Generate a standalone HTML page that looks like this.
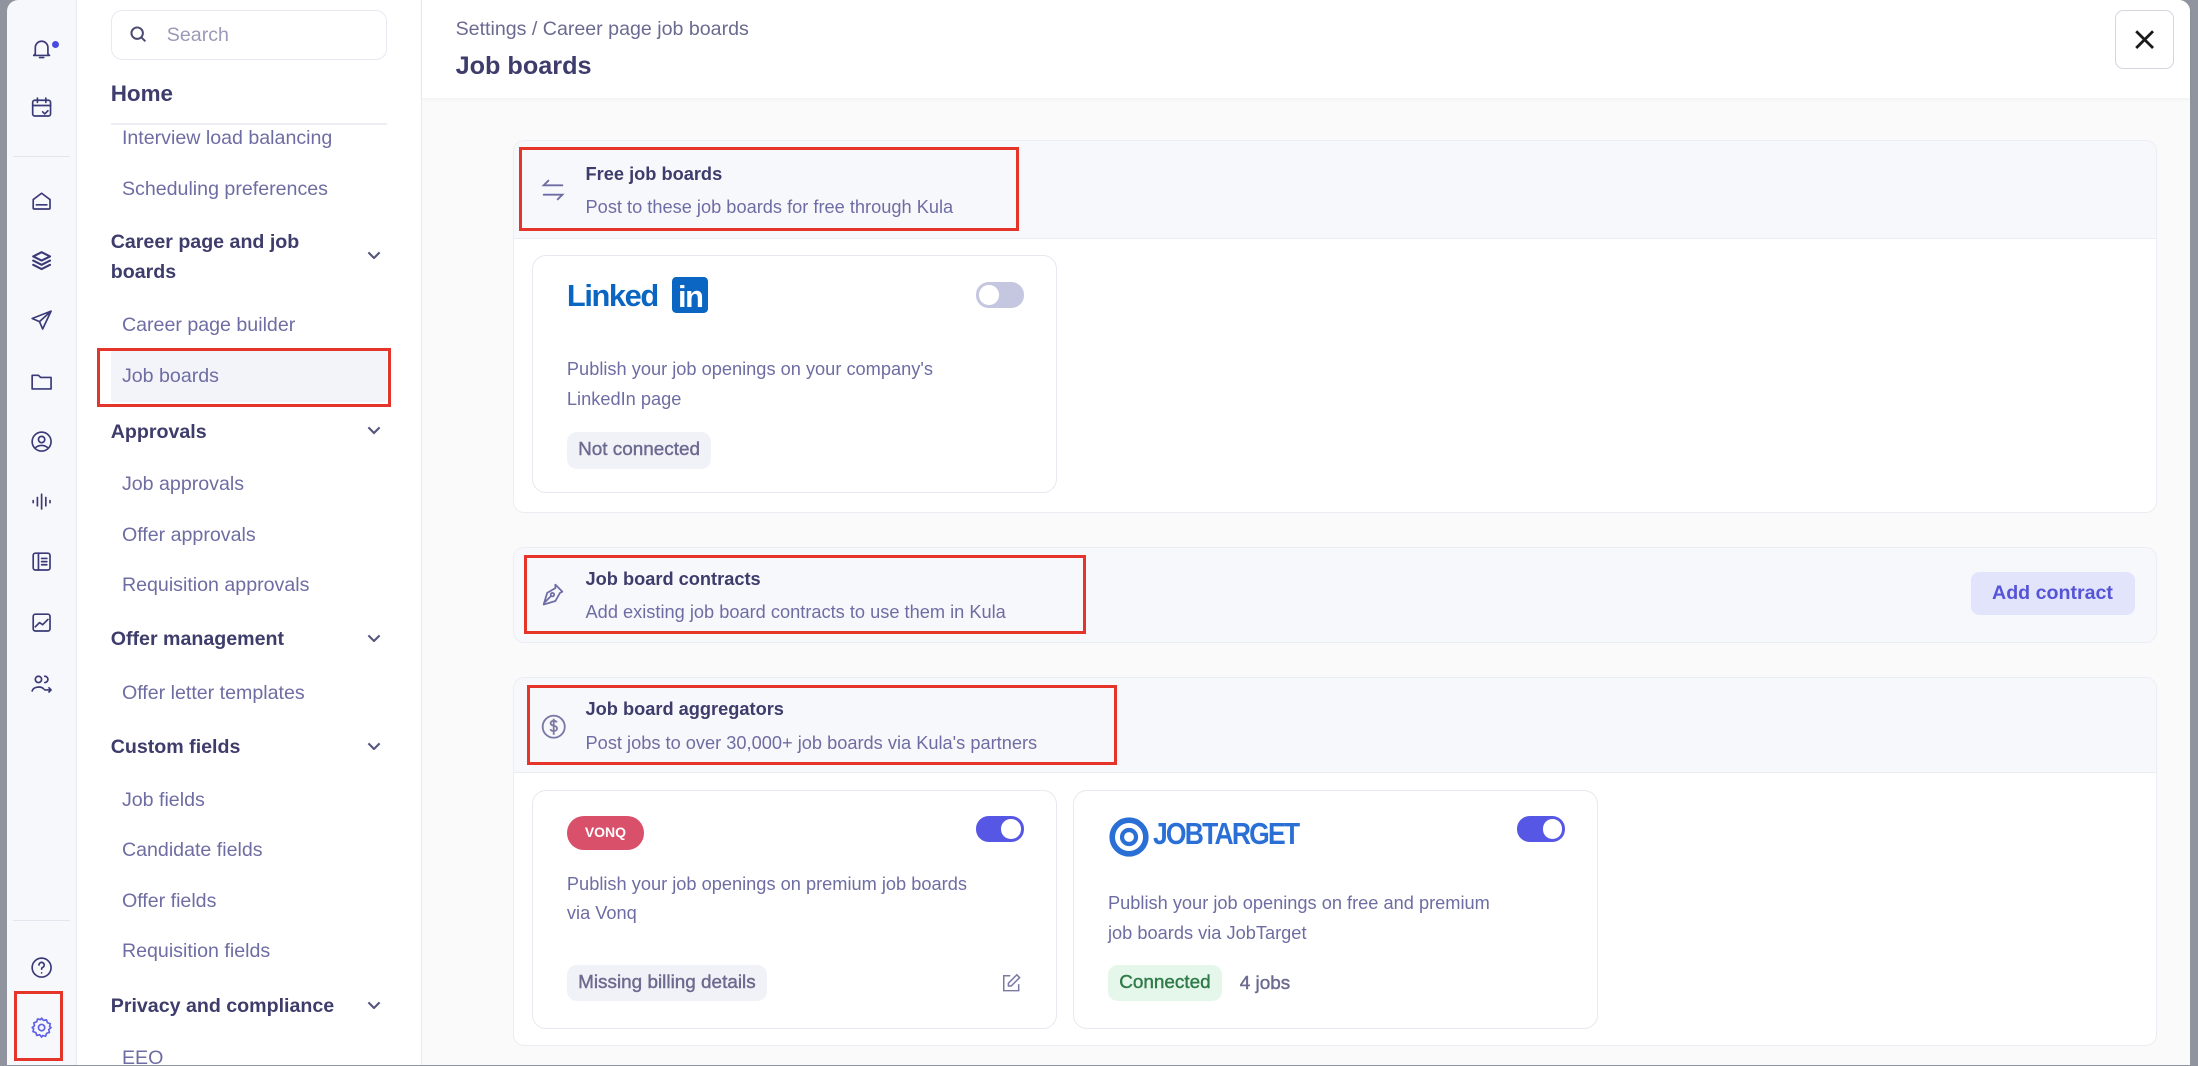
<!DOCTYPE html>
<html><head><meta charset="utf-8"><style>
*{box-sizing:border-box;margin:0;padding:0}
html,body{width:2198px;height:1066px;overflow:hidden;background:#8f949e}
#w{zoom:1.40179;position:relative;width:1568px;height:760px;font-family:"Liberation Sans",sans-serif;}
.a{position:absolute}
#rail{left:5px;top:0;width:50px;height:760px;background:#f7f8fc;border-right:1px solid #e8e9f0;border-top-left-radius:8px}
#side{left:55px;top:0;width:246px;height:760px;background:#fff;border-right:1px solid #e8e9f0}
#main{left:301px;top:0;width:1261px;height:760px;background:#fafafa;border-top-right-radius:8px}
.ic{position:absolute;left:13px;width:24px;height:24px}
.ic svg{width:18px;height:18px;margin:3px;fill:none;stroke:#3b3a78;stroke-width:1.6;stroke-linecap:round;stroke-linejoin:round}
.it{position:absolute;left:32px;font-size:14px;color:#6e6da3;line-height:18px;margin-top:1px}
.hd{position:absolute;left:24px;font-size:14px;font-weight:bold;color:#3d3c6b;line-height:21px;margin-top:1px}
.chev{position:absolute;left:207px;width:10px;height:6px}
.red{position:absolute;border:2.5px solid #e5352b}
.sec{position:absolute;left:65px;width:1173px;background:#fff;border:1px solid #ececf3;border-radius:8px;overflow:hidden}
.sh{position:absolute;left:0;top:0;width:100%;background:#f7f8fc;border-bottom:1px solid #ececf3}
.t{position:absolute;left:51px;font-size:13px;font-weight:bold;color:#3d3c6b}
.s{position:absolute;left:51px;font-size:13px;color:#6e6da3}
.card{position:absolute;width:374px;height:170px;background:#fff;border:1px solid #e8e9f0;border-radius:10px}
.d{position:absolute;left:24px;font-size:13px;color:#6e6da3;line-height:21px}
.bd{position:absolute;left:24px;height:26px;border-radius:7px;background:#f1f2f8;color:#6b6a8f;font-size:13.5px;padding:0 8px;line-height:26px;-webkit-text-stroke:0.3px currentColor}
.tg{position:absolute;left:316px;width:34px;height:18px;border-radius:9px}
.tg i{position:absolute;top:2px;width:14px;height:14px;border-radius:50%;background:#fff}
</style></head><body><div id="w">
<div class="a" id="rail">
<div class="ic" style="top:23px"><svg viewBox="0 0 24 24"><path d="M6 17V11a6 6 0 0 1 12 0v6l1.5 1.5h-15z M10 20.5h4"/></svg></div>
<div class="a" style="left:32px;top:29px;width:5px;height:5px;border-radius:50%;background:#4a4ae0"></div>
<div class="ic" style="top:65px"><svg viewBox="0 0 24 24"><rect x="3.5" y="5" width="17" height="15" rx="2"/><path d="M3.5 10h17M8 3v4M16 3v4M13 16l2 2 3-3"/></svg></div>
<div class="a" style="left:4px;top:111px;width:41px;height:1px;background:#e4e5ee"></div>
<div class="ic" style="top:131px"><svg viewBox="0 0 24 24"><path d="M4 11l8-6 8 6v8a1 1 0 0 1-1 1H5a1 1 0 0 1-1-1z M7 16h10"/></svg></div>
<div class="ic" style="top:174px"><svg viewBox="0 0 24 24" style="stroke-width:2"><path d="M12 4l8 4-8 4-8-4z M4 12l8 4 8-4 M4 16l8 4 8-4"/></svg></div>
<div class="ic" style="top:217px"><svg viewBox="0 0 24 24"><path d="M21 3L3 10l7 3 3 7z M10 13l11-10"/></svg></div>
<div class="ic" style="top:260px"><svg viewBox="0 0 24 24"><path d="M3 6h6l2 2h10v11H3z"/></svg></div>
<div class="ic" style="top:303px"><svg viewBox="0 0 24 24"><circle cx="12" cy="12" r="9"/><circle cx="12" cy="10" r="3"/><path d="M6.5 17.5c3-2.5 8-2.5 11 0"/></svg></div>
<div class="ic" style="top:346px"><svg viewBox="0 0 24 24"><path d="M4 11v2M8 8v8M12 5v14M16 8v8M20 11v2"/></svg></div>
<div class="ic" style="top:389px"><svg viewBox="0 0 24 24"><rect x="4" y="4" width="16" height="16" rx="2"/><path d="M9 4v16M12 9h5M12 12h5M12 15h5"/></svg></div>
<div class="ic" style="top:432px"><svg viewBox="0 0 24 24"><rect x="4" y="4" width="16" height="16" rx="2"/><path d="M6 16l4-4 3 2 5-5"/></svg></div>
<div class="ic" style="top:476px"><svg viewBox="0 0 24 24"><circle cx="9" cy="8" r="3"/><path d="M3 19c1-4 8-5 11-2M15 5a3 3 0 0 1 0 6M15 18h6M19 16l2 2-2 2"/></svg></div>
<div class="a" style="left:4px;top:656px;width:41px;height:1px;background:#e4e5ee"></div>
<div class="ic" style="top:678px"><svg viewBox="0 0 24 24"><circle cx="12" cy="12" r="9"/><path d="M9.5 9.5a2.5 2.5 0 1 1 3.5 2.3c-.7.4-1 .9-1 1.7M12 17h.01"/></svg></div>
<div class="ic" style="top:721px"><svg viewBox="0 0 24 24" style="stroke:#6060e8"><circle cx="12" cy="12" r="3"/><path d="M12 3l1.8 2.2 2.8-.6.9 2.7 2.7.9-.6 2.8L21 12l-2.2 1.8.6 2.8-2.7.9-.9 2.7-2.8-.6L12 21l-1.8-2.2-2.8.6-.9-2.7-2.7-.9.6-2.8L3 12l2.2-1.8-.6-2.8 2.7-.9.9-2.7 2.8.6z"/></svg></div>
<div class="red" style="left:5px;top:707px;width:35px;height:50px"></div>
</div>
<div class="a" id="side">
<div class="a" style="left:24px;top:7px;width:197px;height:36px;border:1px solid #e8e9f0;border-radius:8px"></div>
<svg class="a" style="left:37px;top:18px" width="14" height="14" viewBox="0 0 24 24" fill="none" stroke="#4a4a70" stroke-width="2.4"><circle cx="10" cy="10" r="7"/><path d="M15 15l5 5"/></svg>
<div class="a" style="left:64px;top:17px;font-size:14px;color:#9a9ab8">Search</div>
<div class="a" style="left:24px;top:58px;font-size:16px;font-weight:bold;color:#3d3c6b">Home</div>
<div class="a" style="left:24px;top:88px;width:197px;height:1px;background:#ededf3"></div>
<div class="it" style="top:89px">Interview load balancing</div>
<div class="it" style="top:125px">Scheduling preferences</div>
<div class="hd" style="top:162px">Career page and job<br>boards</div>
<svg class="chev" style="top:179px" viewBox="0 0 10 6" fill="none" stroke="#55557a" stroke-width="1.5"><path d="M1 1l4 4 4-4"/></svg>
<div class="it" style="top:222px">Career page builder</div>
<div class="a" style="left:24px;top:249px;width:197px;height:38px;background:#f3f4f9;border-radius:2px"></div>
<div class="it" style="top:259px">Job boards</div>
<div class="red" style="left:14px;top:248px;width:210px;height:42px"></div>
<div class="hd" style="top:297px">Approvals</div>
<svg class="chev" style="top:304px" viewBox="0 0 10 6" fill="none" stroke="#55557a" stroke-width="1.5"><path d="M1 1l4 4 4-4"/></svg>
<div class="it" style="top:336px">Job approvals</div>
<div class="it" style="top:372px">Offer approvals</div>
<div class="it" style="top:408px">Requisition approvals</div>
<div class="hd" style="top:445px">Offer management</div>
<svg class="chev" style="top:452px" viewBox="0 0 10 6" fill="none" stroke="#55557a" stroke-width="1.5"><path d="M1 1l4 4 4-4"/></svg>
<div class="it" style="top:485px">Offer letter templates</div>
<div class="hd" style="top:522px">Custom fields</div>
<svg class="chev" style="top:529px" viewBox="0 0 10 6" fill="none" stroke="#55557a" stroke-width="1.5"><path d="M1 1l4 4 4-4"/></svg>
<div class="it" style="top:561px">Job fields</div>
<div class="it" style="top:597px">Candidate fields</div>
<div class="it" style="top:633px">Offer fields</div>
<div class="it" style="top:669px">Requisition fields</div>
<div class="hd" style="top:707px">Privacy and compliance</div>
<svg class="chev" style="top:714px" viewBox="0 0 10 6" fill="none" stroke="#55557a" stroke-width="1.5"><path d="M1 1l4 4 4-4"/></svg>
<div class="it" style="top:745px">EEO</div>
</div>
<div class="a" id="main">
<div class="a" style="left:0;top:0;width:1261px;height:70px;background:#fff;box-shadow:0 1px 3px rgba(0,0,0,.04);border-top-right-radius:8px"></div>
<div class="a" style="left:24px;top:13px;font-size:14px;color:#6b6a90">Settings / Career page job boards</div>
<div class="a" style="left:24px;top:37px;font-size:18px;font-weight:bold;color:#3d3c6b">Job boards</div>
<div class="a" style="left:1208px;top:7px;width:42px;height:42px;border:1px solid #d5d5de;border-radius:6px;background:#fff"></div>
<svg class="a" style="left:1220px;top:19px" width="18" height="18" viewBox="0 0 18 18" stroke="#1a1a1a" stroke-width="2"><path d="M3 3l12 12M15 3L3 15"/></svg>

<div class="sec" style="top:100px;height:266px">
<div class="sh" style="height:70px"></div>
<svg class="a" style="left:18px;top:25px" width="20" height="20" viewBox="0 0 24 24" fill="none" stroke="#6e6da3" stroke-width="1.6" stroke-linecap="round"><path d="M20 8H4l4-4M4 16h16l-4 4"/></svg>
<div class="t" style="top:16px">Free job boards</div>
<div class="s" style="top:40px">Post to these job boards for free through Kula</div>
<div class="card" style="left:13px;top:81px">
<div class="a" style="left:24px;top:16px;font-size:22px;font-weight:bold;color:#0a66c2;letter-spacing:-1px">Linked</div>
<div class="a" style="left:99px;top:15px;width:26px;height:26px;background:#0a66c2;border-radius:3px;color:#fff;font-size:22px;font-weight:bold;text-align:center;line-height:28px;letter-spacing:-1px">in</div>
<div class="tg" style="top:19px;background:#c5c7e0"><i style="left:2px"></i></div>
<div class="d" style="top:71px">Publish your job openings on your company's<br>LinkedIn page</div>
<div class="bd" style="top:126px">Not connected</div>
</div>
</div>

<div class="sec" style="top:390px;height:69px">
<div class="sh" style="height:69px;border:0"></div>
<svg class="a" style="left:18px;top:23px" width="20" height="20" viewBox="0 0 24 24" fill="none" stroke="#6e6da3" stroke-width="1.5" stroke-linejoin="round"><path d="M14 4l6 6-2 1-4 7-10 3 3-10 7-4z M4 20l6-6"/><circle cx="11.5" cy="12.5" r="1.5"/></svg>
<div class="t" style="top:15px">Job board contracts</div>
<div class="s" style="top:39px">Add existing job board contracts to use them in Kula</div>
<div class="a" style="left:1039px;top:17px;width:117px;height:31px;background:#e2e4fb;border-radius:6px;color:#5555d6;font-size:14px;font-weight:bold;text-align:center;line-height:31px">Add contract</div>
</div>

<div class="sec" style="top:483px;height:263px">
<div class="sh" style="height:68px"></div>
<svg class="a" style="left:18px;top:24px" width="21" height="21" viewBox="0 0 24 24" fill="none" stroke="#7a79a3" stroke-width="1.5"><circle cx="12" cy="12" r="9"/><path d="M14.5 8.5c-.5-1-1.5-1.3-2.5-1.3-1.5 0-2.5.8-2.5 2s1 1.7 2.5 2 2.7.8 2.7 2.1-1.2 2.2-2.7 2.2c-1.2 0-2.3-.5-2.7-1.5M12 5.5v13"/></svg>
<div class="t" style="top:15px">Job board aggregators</div>
<div class="s" style="top:39px">Post jobs to over 30,000+ job boards via Kula's partners</div>
<div class="card" style="left:13px;top:80px">
<div class="a" style="left:24px;top:18px;width:55px;height:24px;background:#d9506a;border-radius:12px;color:#fff;font-size:10px;font-weight:bold;text-align:center;line-height:24px">VONQ</div>
<div class="tg" style="top:18px;background:#5757e6"><i style="left:18px"></i></div>
<div class="d" style="top:56px">Publish your job openings on premium job boards<br>via Vonq</div>
<div class="bd" style="top:124px">Missing billing details</div>
<svg class="a" style="left:333px;top:129px" width="16" height="16" viewBox="0 0 24 24" fill="none" stroke="#7a79a3" stroke-width="1.6"><path d="M11 4H4v16h16v-7M18 3l3 3-9 9H9v-3z"/></svg>
</div>
<div class="card" style="left:399px;top:80px">
<svg class="a" style="left:24px;top:18px" width="30" height="30" viewBox="0 0 30 30" fill="none" stroke="#2a6fd6"><circle cx="15" cy="15" r="12" stroke-width="4"/><circle cx="15" cy="15" r="5" stroke-width="3"/></svg>
<div class="a" style="left:56px;top:18px;font-size:22px;font-weight:bold;color:#2a6fd6;letter-spacing:-1.5px;transform:scaleX(.86);transform-origin:left">JOBTARGET</div>
<div class="tg" style="top:18px;background:#5757e6"><i style="left:18px"></i></div>
<div class="d" style="top:70px">Publish your job openings on free and premium<br>job boards via JobTarget</div>
<div class="bd" style="top:124px;background:#e5f6ea;color:#2e7a48">Connected</div>
<div class="a" style="left:118px;top:130px;font-size:13.5px;color:#6b6a8f;-webkit-text-stroke:0.3px #6b6a8f">4 jobs</div>
</div>
</div>

<div class="red" style="left:69px;top:105px;width:357px;height:60px"></div>
<div class="red" style="left:73px;top:396px;width:401px;height:56px"></div>
<div class="red" style="left:75px;top:489px;width:421px;height:57px"></div>
</div>
</div></body></html>
